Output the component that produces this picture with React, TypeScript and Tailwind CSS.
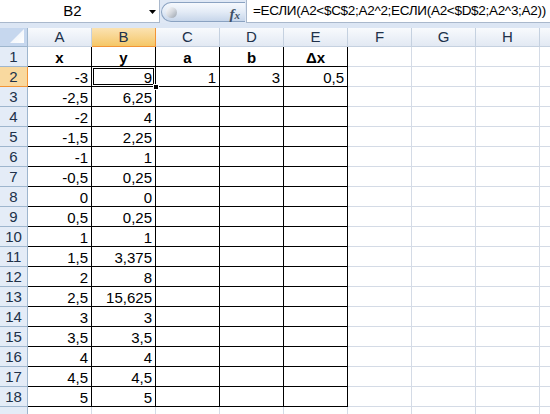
import React from "react";

const colA = ["-3","-2,5","-2","-1,5","-1","-0,5","0","0,5","1","1,5","2","2,5","3","3,5","4","4,5","5"];
const colB = ["9","6,25","4","2,25","1","0,25","0","0,25","1","3,375","8","15,625","3","3,5","4","4,5","5"];
const letters = ["A","B","C","D","E","F","G","H",""];
const heads = ["x","y","a","b","Δx"];

function cellValue(r: number, c: number): string {
  if (r === 1) return heads[c] ?? "";
  if (r >= 2 && r <= 18) {
    if (c === 0) return colA[r - 2];
    if (c === 1) return colB[r - 2];
    if (r === 2 && c === 2) return "1";
    if (r === 2 && c === 3) return "3";
    if (r === 2 && c === 4) return "0,5";
  }
  return "";
}

export default function App() {
  const rows = Array.from({ length: 19 }, (_, i) => i + 1);
  const cols = Array.from({ length: 9 }, (_, i) => i);
  const font = { fontFamily: '"Liberation Sans", Arial, sans-serif' };
  return (
    <div className="w-[550px] h-[414px] overflow-hidden bg-white flex flex-col text-[15px] text-black" style={font}>
      {/* formula bar */}
      <div className="h-[23px] flex bg-[#dfe8f5] shrink-0">
        <div className="w-[160px] h-[23px] bg-white border border-[#a9b8cc] border-l-0 border-t-0 flex items-center relative">
          <span className="w-[145px] text-center pt-[1px]">B2</span>
          <svg width="8" height="5" viewBox="0 0 8 5" className="absolute left-[149px] top-[10px]">
            <path d="M0 0 H7 L3.5 4 Z" fill="#000" />
          </svg>
        </div>
        <div className="w-[86px] h-[23px] flex items-center pl-[1px]">
          <div className="w-[84px] h-[20px] rounded-l-[10px] border border-[#8aa2c1] border-r-0 bg-gradient-to-b from-[#f6f9fd] via-[#e3ebf6] to-[#c7d6ea] flex items-center relative">
            <div className="absolute left-[4px] top-[4px] w-[11px] h-[11px] rounded-full bg-gradient-to-br from-[#ffffff] via-[#d4d8de] to-[#9aa3ae]" />
            <span className="absolute right-[5px] top-[0px] text-[15px] italic text-[#3e4f66]" style={{ fontFamily: '"Liberation Serif", "DejaVu Serif", serif', fontWeight: 700 }}>
              f<span className="text-[11px]">x</span>
            </span>
          </div>
        </div>
        <div className="flex-1 h-[23px] bg-white border border-[#a9b8cc] border-t-0 border-r-0 flex items-center pl-[6px] pt-[1px] whitespace-nowrap overflow-hidden tracking-[-0.3px] text-[13.5px]">
          =ЕСЛИ(A2&lt;$C$2;A2^2;ЕСЛИ(A2&lt;$D$2;A2^3;A2))
        </div>
      </div>
      <div className="h-[5px] bg-[#dce6f4] shrink-0" />
      {/* grid */}
      <div className="grid grid-cols-[28px_repeat(9,64px)] grid-rows-[19px_repeat(19,20px)]">
        {/* corner */}
        <div className="bg-[#c6d7ee] border-r border-b border-[#9eb6ce] relative">
          <svg width="14" height="14" viewBox="0 0 14 14" className="absolute right-[3px] bottom-[3px]">
            <defs>
              <linearGradient id="tri" x1="0" y1="0" x2="1" y2="1">
                <stop offset="0" stopColor="#e9f0f9" />
                <stop offset="1" stopColor="#ffffff" />
              </linearGradient>
            </defs>
            <path d="M14 0 V14 H0 Z" fill="url(#tri)" />
          </svg>
        </div>
        {cols.map((c) =>
          c === 1 ? (
            <div key={"h" + c} className="bg-gradient-to-b from-[#fbe2b1] to-[#f5c766] border-r border-b border-[#f29436] flex items-center justify-center text-[#20314a] pt-[1px]">
              {letters[c]}
            </div>
          ) : (
            <div key={"h" + c} className="bg-gradient-to-b from-[#f8fafd] to-[#e2e9f3] border-r border-b border-[#c5d1e0] flex items-center justify-center text-[#20314a] pt-[1px]">
              {letters[c]}
            </div>
          )
        )}
        {rows.map((r) => (
          <React.Fragment key={"r" + r}>
            {r === 2 ? (
              <div className="bg-[#f9d99f] border-r border-b border-[#f29436] flex items-center justify-center text-[#20314a] pt-[2px]">
                {r}
              </div>
            ) : (
              <div className="bg-[#e4ecf7] border-r border-b border-[#9eb6ce] flex items-center justify-center text-[#20314a] pt-[2px]">
                {r <= 18 ? r : ""}
              </div>
            )}
            {cols.map((c) => {
              const black = c <= 4 && r <= 18;
              const v = cellValue(r, c);
              const isHead = r === 1;
              const sel = r === 2 && c === 1;
              return (
                <div
                  key={"c" + r + "-" + c}
                  className={
                    (black ? "border-r border-b border-black " : "border-r border-b border-[#d4dbe6] ") +
                    (isHead ? "font-bold flex items-end justify-center " : "flex items-end justify-end pr-[3px] ") +
                    "relative leading-[16px] whitespace-nowrap"
                  }
                >
                  {v}
                  {sel && (
                    <>
                      <div className="absolute left-[1px] top-[1px] right-[1px] bottom-[1px] border border-black pointer-events-none" />
                      <div className="absolute right-[-4px] bottom-[-4px] w-[6px] h-[6px] bg-black border border-white z-10" />
                    </>
                  )}
                </div>
              );
            })}
          </React.Fragment>
        ))}
      </div>
    </div>
  );
}
